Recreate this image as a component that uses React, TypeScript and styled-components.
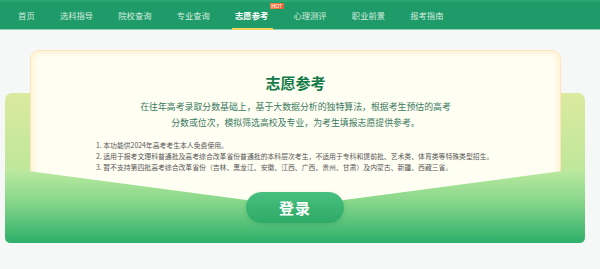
import * as React from "react";
import styled, { createGlobalStyle } from "styled-components";

const GlobalStyle = createGlobalStyle`
  html, body {
    margin: 0;
    padding: 0;
    background: #f6f8f8;
    font-family: "Noto Sans CJK SC", "Noto Sans", sans-serif;
  }
`;

const Page = styled.div`
  width: 600px;
  height: 269px;
  overflow: hidden;
  background: #f6f8f8;
`;

const NavBar = styled.nav`
  box-sizing: border-box;
  height: 30px;
  display: flex;
  align-items: stretch;
  padding-left: 5.5px;
  background: #1f9b69;
  border-top: 2px solid #29a874;
  border-bottom: 1px solid #8fd1b3;
`;

const NavItem = styled.a<{ active?: boolean }>`
  position: relative;
  display: flex;
  align-items: center;
  padding: 0 12.6px;
  font-size: 8.3px;
  line-height: 1;
  color: ${p => (p.active ? "#ffffff" : "#d4ecdf")};
  font-weight: ${p => (p.active ? 700 : 400)};
  white-space: nowrap;
  cursor: pointer;

  &::after {
    content: "";
    display: ${p => (p.active ? "block" : "none")};
    position: absolute;
    left: 50%;
    bottom: -1px;
    width: 41px;
    height: 2px;
    margin-left: -19.5px;
    background: #f4d35a;
  }
`;

const HotBadge = styled.span`
  position: absolute;
  top: 1px;
  right: -3px;
  width: 14px;
  height: 6px;
  border-radius: 1px;
  background: linear-gradient(90deg, #f7874a, #ef5d37);
  color: #fff;
  font-family: "Liberation Sans", Arial, sans-serif;
  font-size: 5px;
  line-height: 6px;
  text-align: center;
  font-weight: 400;
`;

const Stage = styled.section`
  position: relative;
  height: 239px;
  padding-top: 20px;
  box-sizing: border-box;
`;

const BackPanel = styled.div`
  position: absolute;
  left: 5px;
  top: 63px;
  width: 580px;
  height: 150px;
  border-radius: 7px;
  background: linear-gradient(180deg, #dbea9f 0%, #c2e79b 45%, #b3e39b 100%);
`;

const Card = styled.div`
  position: relative;
  box-sizing: border-box;
  width: 531px;
  height: 178px;
  margin-left: 30px;
  padding: 23px 20px 0 65px;
  border-radius: 9px;
  background: #fffef3;
  border: 1px solid #fde6bb;
  box-shadow: inset 0 0 6px 2px #fff0cf;
`;

const Title = styled.h2`
  margin: 0 0 0 -45px;
  font-size: 15px;
  line-height: 18px;
  font-weight: 700;
  color: #137a48;
  text-align: center;
`;

const Desc = styled.p`
  margin: 7px 0 0 -45px;
  font-size: 8.9px;
  line-height: 16px;
  color: #3b7960;
  text-align: center;
`;

const Notes = styled.ol`
  margin: 8.5px 0 0;
  padding: 0;
  list-style: none;
  font-size: 6.85px;
  line-height: 11px;
  color: #575757;
`;

const WaveFront = styled.svg`
  position: absolute;
  left: 5px;
  top: 138px;
  width: 580px;
  height: 75px;
  display: block;
`;

const LoginButton = styled.button`
  position: absolute;
  left: 246px;
  top: 162px;
  width: 98px;
  height: 31px;
  border: 0;
  border-radius: 16px;
  background: linear-gradient(180deg, #49c07f 0%, #2ea966 100%);
  box-shadow: 0 2px 4px rgba(30, 140, 80, 0.25);
  color: #fff;
  font-family: "Noto Sans CJK SC", sans-serif;
  font-size: 15px;
  font-weight: 700;
  letter-spacing: 1px;
  cursor: pointer;
`;

const navItems = ["首页", "选科指导", "院校查询", "专业查询", "志愿参考", "心理测评", "职业前景", "报考指南"];

const notes = [
  "1. 本功能供2024年高考考生本人免费使用。",
  "2. 适用于报考文理科普通批及高考综合改革省份普通批的本科层次考生，不适用于专科和提前批、艺术类、体育类等特殊类型招生。",
  "3. 暂不支持第四批高考综合改革省份（吉林、黑龙江、安徽、江西、广西、贵州、甘肃）及内蒙古、新疆、西藏三省。"
];

export default function App() {
  return (
    <Page>
      <GlobalStyle />
      <NavBar>
        {navItems.map(item => (
          <NavItem key={item} active={item === "志愿参考"}>
            {item}
            {item === "志愿参考" && <HotBadge>HOT</HotBadge>}
          </NavItem>
        ))}
      </NavBar>
      <Stage>
        <BackPanel />
        <Card>
          <Title>志愿参考</Title>
          <Desc>
            在往年高考录取分数基础上，基于大数据分析的独特算法，根据考生预估的高考
            <br />
            分数或位次，模拟筛选高校及专业，为考生填报志愿提供参考。
          </Desc>
          <Notes>
            {notes.map(n => (
              <li key={n}>{n}</li>
            ))}
          </Notes>
        </Card>
        <WaveFront viewBox="0 0 580 75" preserveAspectRatio="none">
          <defs>
            <linearGradient id="waveGrad" x1="0" y1="0" x2="0" y2="1">
              <stop offset="0" stopColor="#bdeaa0" />
              <stop offset="0.45" stopColor="#86d68a" />
              <stop offset="1" stopColor="#2daf6a" />
            </linearGradient>
          </defs>
          <path
            d="M0,8 Q0,0.5 8,1 L290,38.5 L572,1 Q580,0.5 580,8 L580,69 Q580,75 574,75 L6,75 Q0,75 0,69 Z"
            fill="url(#waveGrad)"
          />
        </WaveFront>
        <LoginButton>登录</LoginButton>
      </Stage>
    </Page>
  );
}
